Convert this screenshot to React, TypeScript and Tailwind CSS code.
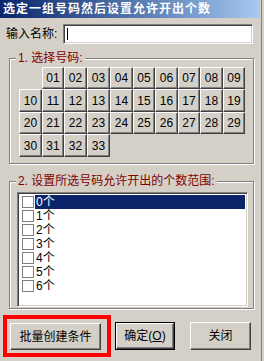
import type { FC, ReactNode } from 'react';

const FONT = { fontFamily: '"Liberation Sans", "Noto Sans CJK SC", sans-serif' };

const colWidths = 'grid-cols-[23px_22px_23px_23px_23px_22px_23px_22px_23px_22px]';
const rowHeights = 'grid-rows-[22px_23px_22px_23px]';

const cells: (string | null)[] = [
  null, '01', '02', '03', '04', '05', '06', '07', '08', '09',
  '10', '11', '12', '13', '14', '15', '16', '17', '18', '19',
  '20', '21', '22', '23', '24', '25', '26', '27', '28', '29',
  '30', '31', '32', '33', null, null, null, null, null, null,
];

const counts = ['0个', '1个', '2个', '3个', '4个', '5个', '6个'];

const raised =
  'border border-t-white border-l-white border-r-[#404040] border-b-[#404040] shadow-[inset_-1px_-1px_0_#808080] bg-[#d4d0c8]';

const GroupBox: FC<{ label: string; className: string; children: ReactNode }> = ({ label, className, children }) => (
  <div
    className={`relative ml-[9px] w-[245px] border border-[#808080] shadow-[inset_1px_1px_0_#fff,1px_1px_0_#fff] ${className}`}
  >
    <div className="absolute left-[6px] top-[-8px] whitespace-nowrap bg-[#d4d0c8] px-[2px] text-[12px] leading-[14px] text-[#800000]">
      {label}
    </div>
    {children}
  </div>
);

const App: FC = () => {
  return (
    <div className="relative h-[361px] w-[264px] overflow-hidden bg-[#d4d0c8] text-black" style={FONT}>
      <div className="flex h-full w-[262px] flex-col border-r border-[#808080]">
        <div className="flex h-[18px] w-[260px] items-center bg-gradient-to-r from-[#0a246a] to-[#a6caf0] px-[3px]">
          <span className="whitespace-nowrap text-[12px] font-bold leading-none tracking-[1px] text-white">
            选定一组号码然后设置允许开出个数
          </span>
        </div>

        <div className="mt-[6px] flex items-center pl-[6px]">
          <span className="w-[57px] shrink-0 whitespace-nowrap text-[12px] leading-none">输入名称:</span>
          <div className="relative h-[20px] w-[190px] shrink-0 border border-t-[#808080] border-l-[#808080] border-r-white border-b-white bg-white shadow-[inset_1px_1px_0_#404040,inset_-1px_-1px_0_#d4d0c8]">
            <span className="absolute left-[3px] top-[3px] h-[12px] w-px bg-black" />
          </div>
        </div>

        <GroupBox label="1. 选择号码:" className="mt-[14px] h-[106px]">
          <div className={`ml-[9px] mt-[8px] grid ${colWidths} ${rowHeights}`}>
            {cells.map((n, i) =>
              n ? (
                <div key={i} className={`flex items-center justify-center text-[12px] leading-none ${raised}`}>
                  {n}
                </div>
              ) : (
                <div key={i} />
              )
            )}
          </div>
        </GroupBox>

        <GroupBox label="2. 设置所选号码允许开出的个数范围:" className="mt-[17px] h-[128px]">
          <div className="ml-[7px] mt-[10px] h-[115px] w-[231px] border border-t-[#808080] border-l-[#808080] border-r-white border-b-white bg-white p-[2px] shadow-[inset_1px_1px_0_#404040,inset_-1px_-1px_0_#d4d0c8]">
            {counts.map((c, i) => (
              <div key={c} className="flex h-[14px] items-center">
                <span className="ml-[2px] mr-px h-[12px] w-[12px] border border-[#808080] bg-white" />
                <span
                  className={`flex h-[14px] flex-1 items-center pl-px text-[12px] leading-none ${
                    i === 0 ? 'bg-[#0a246a] text-white' : ''
                  }`}
                >
                  {c}
                </span>
              </div>
            ))}
          </div>
        </GroupBox>

        <div className="mt-[13px] flex items-start pl-[10px]">
          <div className="relative mt-px">
            <button className={`h-[27px] w-[91px] text-[12px] leading-none ${raised}`}>批量创建条件</button>
            <div className="pointer-events-none absolute left-[-7px] top-[-8px] h-[42px] w-[108px] border-4 border-[#ff0000]" />
          </div>
          <div className="ml-[14px] h-[28px] w-[60px] border border-black">
            <button className={`h-full w-full text-[12px] leading-none ${raised}`}>
              确定(<span className="underline">O</span>)
            </button>
          </div>
          <button className={`ml-[15px] h-[28px] w-[61px] text-[12px] leading-none ${raised}`}>关闭</button>
        </div>
      </div>
    </div>
  );
};

export default App;
